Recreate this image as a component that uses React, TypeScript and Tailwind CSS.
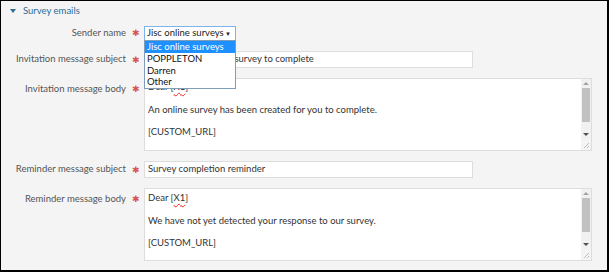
import React from "react";

const font = { fontFamily: "Lato, 'Open Sans', sans-serif" };

const Label = ({ text, top }: { text: string; top?: boolean }) => (
  <div className={`flex w-[143px] shrink-0 justify-end ${top ? "items-start pt-[4px]" : "items-center"}`}>
    <span className="whitespace-nowrap text-[#555]">{text}</span>
    <span className="ml-[6px] mr-[4px] text-[9px] leading-[14px] text-[#d9534f]">✱</span>
  </div>
);

const Scrollbar = () => (
  <div className="flex w-[10px] shrink-0 flex-col bg-[#f1f1f1]">
    <div className="flex h-[9px] items-center justify-center">
      <div className="h-0 w-0 border-x-[3px] border-b-[3px] border-x-transparent border-b-[#a3a3a3]" />
    </div>
    <div className="mx-[1px] h-[34px] bg-[#c1c1c1]" />
    <div className="flex-1" />
    <div className="flex h-[9px] items-center justify-center">
      <div className="h-0 w-0 border-x-[3px] border-t-[3px] border-x-transparent border-t-[#505050]" />
    </div>
    <div className="flex h-[11px] items-end justify-end bg-[#f4f4f4] pb-[1px] pr-[1px]">
      <svg width="7" height="7" viewBox="0 0 7 7">
        <path d="M6 1 L1 6 M6 4 L4 6" stroke="#b0b0b0" strokeWidth="0.8" />
      </svg>
    </div>
  </div>
);

const TextBox = ({ lines, offset }: { lines: React.ReactNode[]; offset: number }) => (
  <div className="flex h-[73px] w-[448px] border border-[#ddd] bg-white">
    <div className="relative flex-1 overflow-hidden">
      <div className="absolute left-[3px] right-0 leading-[11.3px] text-[#333]" style={{ top: offset }}>
        {lines.map((l, i) => (
          <div key={i} className="h-[11.3px] whitespace-nowrap">{l}</div>
        ))}
      </div>
    </div>
    <Scrollbar />
  </div>
);

const Dear = () => (
  <>
    Dear [<span className="underline decoration-wavy decoration-[#e22] decoration-1 underline-offset-2">X1</span>]
  </>
);

export default function App() {
  return (
    <div className="h-[272px] w-[609px] overflow-hidden bg-white" style={font}>
      <div className="h-full border-t border-l border-r-2 border-b-2 border-black bg-[#f4f4f4] text-[9.5px]">
        <div className="flex h-[19px] items-center pl-[9px] pt-[1px] text-[#2c6b93]">
          <div className="mr-[7px] h-0 w-0 border-x-[3px] border-t-[4px] border-x-transparent border-t-[#2c6b93]" />
          <span className="text-[9.5px]">Survey emails</span>
        </div>

        <div className="flex flex-col gap-[10px] pt-[6px]">
          <div className="flex h-[14px]">
            <Label text="Sender name" />
            <div className="relative">
              <div className="flex h-[15px] w-[92px] items-center justify-between whitespace-nowrap border border-[#7eb4ea] bg-white pl-[2px] pr-[4px] text-[#222]">
                <span>Jisc online surveys</span>
                <span className="text-[6px]">▼</span>
              </div>
              <div className="absolute left-0 top-[14px] z-10 w-[92px] whitespace-nowrap border border-[#7f9db9] bg-white leading-[11.8px] text-[#111]">
                <div className="bg-[#1e90ff] px-[2px] text-white">Jisc online surveys</div>
                <div className="px-[2px]">POPPLETON</div>
                <div className="px-[2px]">Darren</div>
                <div className="px-[2px]">Other</div>
              </div>
            </div>
          </div>

          <div className="flex h-[18px] pt-[1px]">
            <Label text="Invitation message subject" />
            <div className="flex h-[17px] w-[329px] items-center whitespace-nowrap border border-[#ddd] bg-white px-[3px] text-[#333]">
              Please complete the survey to complete
            </div>
          </div>

          <div className="flex">
            <Label text="Invitation message body" top />
            <TextBox
              offset={2}
              lines={[<Dear />, "", "An online survey has been created for you to complete.", "", "[CUSTOM_URL]"]}
            />
          </div>

          <div className="flex h-[17px]">
            <Label text="Reminder message subject" />
            <div className="flex h-[17px] w-[329px] items-center border border-[#ddd] bg-white px-[3px] text-[#333]">
              Survey completion reminder
            </div>
          </div>

          <div className="flex">
            <Label text="Reminder message body" top />
            <TextBox
              offset={3}
              lines={[<Dear />, "", "We have not yet detected your response to our survey.", "", "[CUSTOM_URL]"]}
            />
          </div>
        </div>
      </div>
    </div>
  );
}
